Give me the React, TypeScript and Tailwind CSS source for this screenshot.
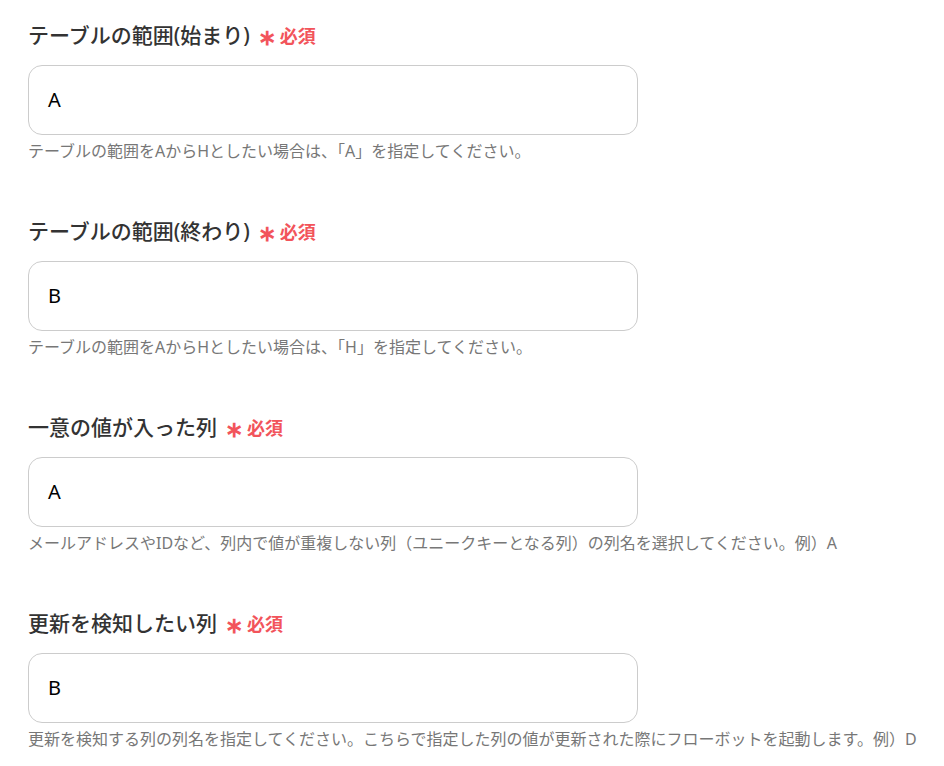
import React from "react";

const fields = [
  {
    label: "テーブルの範囲(始まり)",
    value: "A",
    help: "テーブルの範囲をAからHとしたい場合は、「A」を指定してください。",
  },
  {
    label: "テーブルの範囲(終わり)",
    value: "B",
    help: "テーブルの範囲をAからHとしたい場合は、「H」を指定してください。",
  },
  {
    label: "一意の値が入った列",
    value: "A",
    help: "メールアドレスやIDなど、列内で値が重複しない列（ユニークキーとなる列）の列名を選択してください。例）A",
  },
  {
    label: "更新を検知したい列",
    value: "B",
    help: "更新を検知する列の列名を指定してください。こちらで指定した列の値が更新された際にフローボットを起動します。例）D",
  },
];

const App = () => {
  return (
    <div className="w-[944px] h-[766px] overflow-hidden bg-white px-[28px] pt-[21px] font-['Noto_Sans','Noto_Sans_CJK_JP',sans-serif]">
      {fields.map((f, i) => (
        <div key={i} className="mb-[54px]">
          <div className="flex items-center h-[30px]">
            <span className="text-[21px] font-medium text-[#333]">{f.label}</span>
            <span className="ml-[8px] text-[#f2545b] text-[22px] font-bold leading-none">∗</span>
            <span className="ml-[4px] text-[#f2545b] text-[18px] font-bold">必須</span>
          </div>
          <div className="mt-[14px] w-[610px] h-[70px] rounded-[14px] border border-[#cccccc] flex items-center pl-[19px]">
            <span className="text-[20px] text-black">{f.value}</span>
          </div>
          <p className="mt-[4px] text-[16px] leading-[24px] text-[#777] whitespace-nowrap [text-spacing-trim:trim-both]">{f.help}</p>
        </div>
      ))}
    </div>
  );
};

export default App;
